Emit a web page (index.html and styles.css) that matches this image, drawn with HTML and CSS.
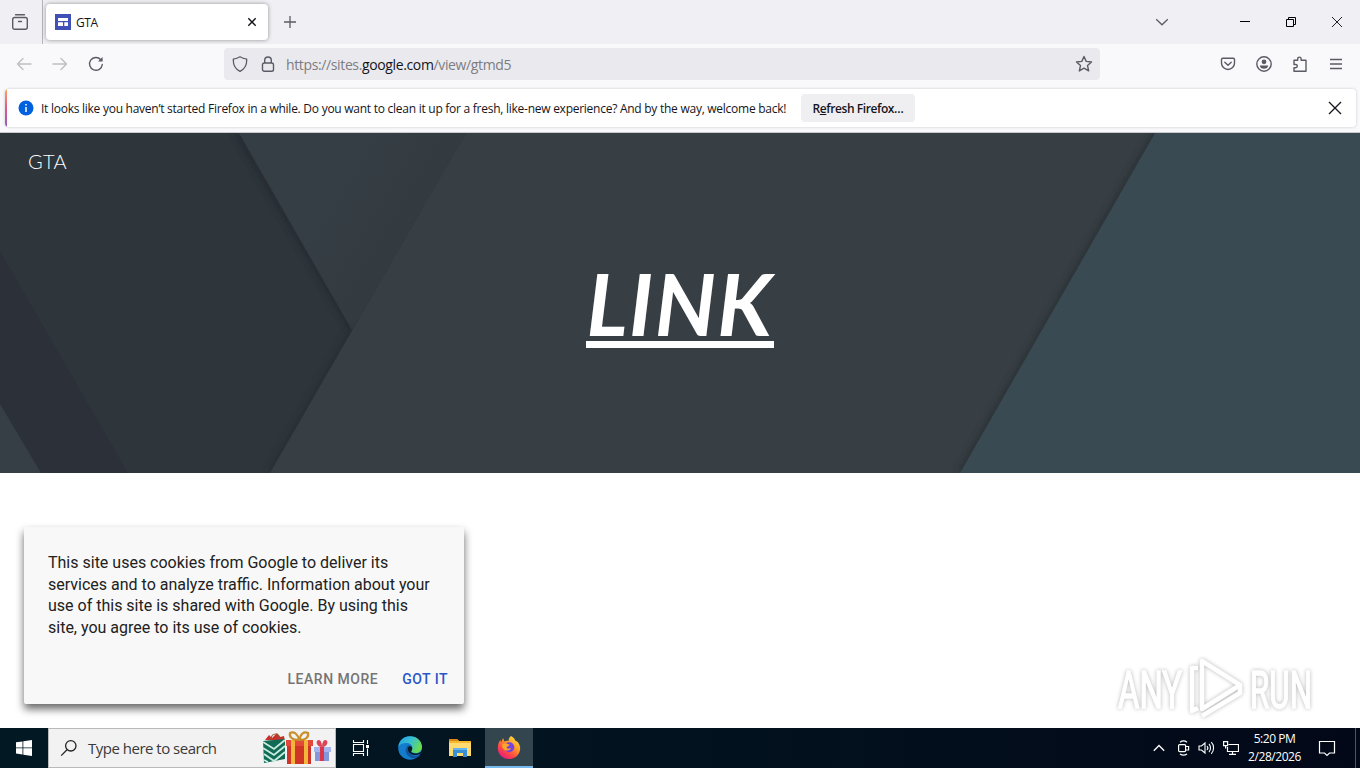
FILE: index.html
```
<!DOCTYPE html>
<html lang="en">
<head>
    <meta charset="UTF-8">
    <meta name="viewport" content="width=device-width, initial-scale=1.0">
    <title>GTA</title>
    <link rel="stylesheet" href="styles.css">
</head>
<body>
    <!-- Tab strip -->
    <header class="tab-strip">
        <div class="firefox-view">
            <svg width="18" height="18" viewBox="0 0 18 18" fill="none" stroke="#5b5b66" stroke-width="1.4" stroke-linecap="round">
                <path d="M4.500 1.700h9"/>
                <rect x="1.700" y="4.500" width="14.600" height="11.800" rx="2"/>
                <path d="M7.500 8.500h3"/>
            </svg>
        </div>
        <div class="tab">
            <svg width="16" height="16" viewBox="0 0 16 16">
                <rect width="16" height="16" fill="#4150b5"/>
                <path d="M3 4h10v3H3zM3 8.2h5v3.8H3zM9.3 8.2H13V12H9.3z" fill="#fff"/>
            </svg>
            <span class="tab-title">GTA</span>
            <svg class="tab-close" width="10" height="10" viewBox="0 0 10 10" stroke="#15141a" stroke-width="1.4"><path d="M1.3 1.3l7.4 7.4M8.7 1.3L1.3 8.7"/></svg>
        </div>
        <svg class="new-tab" width="14" height="14" viewBox="0 0 14 14" stroke="#5b5b66" stroke-width="1.3"><path d="M7 1v12M1 7h12"/></svg>
        <div class="window-buttons">
            <svg width="14" height="14" viewBox="0 0 14 14" fill="none" stroke="#5b5b66" stroke-width="1.3"><path d="M1.2 4.2L7 9.8l5.8-5.6"/></svg>
            <svg class="minimize" width="12" height="12" viewBox="0 0 12 12" stroke="#000"><path d="M1 5.5h10"/></svg>
            <svg width="12" height="12" viewBox="0 0 12 12" fill="none" stroke="#000"><path d="M1.5 3.5h7v7h-7zM3.5 3.5v-2h7v7h-2"/></svg>
            <svg width="12" height="12" viewBox="0 0 12 12" stroke="#222" stroke-width="1"><path d="M1 1l10 10M11 1L1 11"/></svg>
        </div>
    </header>

    <!-- Navigation toolbar -->
    <nav class="toolbar">
        <div class="nav-buttons">
            <svg width="16" height="16" viewBox="0 0 16 16" fill="none" stroke="#bebec4" stroke-width="1.4" stroke-linecap="round" stroke-linejoin="round"><path d="M15 8H1.5M7 2.5L1.5 8 7 13.5"/></svg>
            <svg width="16" height="16" viewBox="0 0 16 16" fill="none" stroke="#bebec4" stroke-width="1.4" stroke-linecap="round" stroke-linejoin="round"><path d="M1 8h13.5M9 2.5L14.5 8 9 13.5"/></svg>
            <svg width="16" height="16" viewBox="0 0 16 16" fill="none" stroke="#5b5b66" stroke-width="1.4" stroke-linecap="round"><path d="M14.3 8.5A6.4 6.4 0 1 1 12.8 3.7"/><path d="M14.6 1v4.6H10z" fill="#5b5b66" stroke="none"/></svg>
        </div>
        <div class="url-bar">
            <svg width="16" height="16" viewBox="0 0 16 16" fill="none" stroke="#5b5b66" stroke-width="1.3" stroke-linejoin="round"><path d="M8 .8c2 1.3 4 2 6.7 2.4C15 9 12.5 13 8 15.3 3.5 13 1 9 1.3 3.2 4 2.8 6 2.1 8 .8z"/></svg>
            <svg width="14" height="16" viewBox="0 0 14 16" fill="none" stroke="#5b5b66" stroke-width="1.4"><rect x="1.5" y="7" width="11" height="8.2" rx="1.8"/><path d="M3.7 7V4.3a3.3 3.3 0 0 1 6.6 0V7"/></svg>
            <span class="url">https://sites.<b>google.com</b>/view/gtmd5</span>
            <svg class="star" width="18" height="18" viewBox="0 0 18 18" fill="none" stroke="#5b5b66" stroke-width="1.4" stroke-linejoin="round"><path d="M9 1.5l2.2 4.9 5.3.6-4 3.6 1.200 5.300L9 13.200l-4.700 2.700 1.200-5.300-4-3.600 5.300-.6z"/></svg>
        </div>
        <div class="toolbar-actions">
            <svg width="16" height="16" viewBox="0 0 16 16" fill="none" stroke="#5b5b66" stroke-width="1.4" stroke-linecap="round" stroke-linejoin="round"><path d="M2.800 2.200h10.400c.8 0 1.300.6 1.300 1.300V7a6.500 6.500 0 0 1-13 0V3.500c0-.7.5-1.300 1.300-1.300z"/><path d="M4.800 6.300L8 9.300l3.200-3"/></svg>
            <svg width="16" height="16" viewBox="0 0 16 16"><circle cx="8" cy="8" r="7.200" fill="none" stroke="#5b5b66" stroke-width="1.4"/><circle cx="8" cy="5.800" r="2.400" fill="#5b5b66"/><path d="M3.800 9.500h8.400c0 2-1.900 3.300-4.200 3.300s-4.200-1.300-4.200-3.300z" fill="#5b5b66"/></svg>
            <svg width="16" height="16" viewBox="0 0 16 16" fill="none" stroke="#5b5b66" stroke-width="1.4" stroke-linejoin="round"><path d="M2 4.300h3.700V2.800a1.700 1.700 0 0 1 3.400 0v1.500H14v11H2v-3.600h1.700a1.600 1.600 0 0 0 0-3.200H2z"/></svg>
            <svg width="14" height="16" viewBox="0 0 14 16" stroke="#5b5b66" stroke-width="1.3"><path d="M1 3.500h12M1 8h12M1 12.500h12"/></svg>
        </div>
    </nav>

    <!-- Notification bar -->
    <section class="notification-wrap">
        <div class="notification">
            <svg width="16" height="16" viewBox="0 0 16 16"><circle cx="8" cy="8" r="7.500" fill="#0061e0"/><path d="M8 7v5M8 4v1.400" stroke="#fff" stroke-width="1.500"/></svg>
            <span class="notification-text">It looks like you haven’t started Firefox in a while. Do you want to clean it up for a fresh, like-new experience? And by the way, welcome back!</span>
            <button class="refresh-button">R<u>e</u>fresh Firefox…</button>
            <svg class="notification-close" width="14" height="14" viewBox="0 0 14 14" stroke="#15141a" stroke-width="1.3"><path d="M1 1l12 12M13 1L1 13"/></svg>
        </div>
    </section>

    <!-- Page content -->
    <main class="page">
        <section class="hero">
            <svg class="hero-bg" width="1360" height="340" viewBox="0 0 1360 340">
                <defs>
                    <filter id="soft" x="-20%" y="-20%" width="140%" height="140%"><feGaussianBlur stdDeviation="3"/></filter>
                    <linearGradient id="fold" gradientUnits="userSpaceOnUse" x1="330" y1="60" x2="405" y2="105">
                        <stop offset="0" stop-color="#363e45"/>
                        <stop offset="1" stop-color="#333b41"/>
                    </linearGradient>
                </defs>
                <rect width="1360" height="340" fill="#2e363c"/>
                <path d="M0 118L128 340H0z" fill="#2c3038"/>
                <path d="M0 271L41 340H0z" fill="#363f45"/>
                <path d="M237 0L352 197" stroke="#20282d" stroke-width="6" opacity=".75" filter="url(#soft)"/>
                <path d="M239 0H466L352 197z" fill="url(#fold)"/>
                <path d="M352 197L270 340" stroke="#20282d" stroke-width="6" opacity=".55" filter="url(#soft)"/>
                <path d="M466 0H1155L960 340H270z" fill="#373f45"/>
                <path d="M1155 0L960 340" stroke="#252c2e" stroke-width="6" opacity=".7" filter="url(#soft)"/>
                <path d="M1155 0H1360V340H960z" fill="#3a4a52"/>
            </svg>
            <div class="site-name">GTA</div>
            <h1 class="hero-title"><a href="#">LINK</a></h1>
        </section>

        <div class="cookie-card">
            <p>This site uses cookies from Google to deliver its services and to analyze traffic. Information about your use of this site is shared with Google. By using this site, you agree to its use of cookies.</p>
            <div class="cookie-buttons">
                <a class="learn-more">LEARN MORE</a>
                <a class="got-it">GOT IT</a>
            </div>
        </div>

        <svg class="watermark" width="220" height="68" viewBox="0 0 220 68">
            <g fill="#fff" stroke="#fff" stroke-width="1.5" font-family="Roboto, sans-serif" font-size="52">
                <text x="4" y="53" textLength="64" lengthAdjust="spacingAndGlyphs">ANY</text>
                <text x="136" y="53" textLength="62" lengthAdjust="spacingAndGlyphs">RUN</text>
            </g>
            <g fill="none" stroke="#fff" stroke-width="4.500" stroke-linejoin="round">
                <path d="M88 6v48l38-24z"/>
                <path d="M84 13h-6v43l6-3M88 61l38-23v-7"/>
            </g>
        </svg>
    </main>

    <!-- Taskbar -->
    <footer class="taskbar">
        <div class="start">
            <svg width="16" height="16" viewBox="0 0 16 16" fill="#fff"><path d="M0 2.300l6.500-.9v6.100H0zM7.300 1.300L16 0v7.500H7.300zM0 8.300h6.500v6.200L0 13.600zM7.300 8.300H16V16l-8.700-1.300z"/></svg>
        </div>
        <div class="search">
            <svg width="18" height="18" viewBox="0 0 18 18" fill="none" stroke="#222" stroke-width="1.3"><circle cx="10.800" cy="6.800" r="5.200"/><path d="M7 10.800L1.200 16.600"/></svg>
            <span>Type here to search</span>
            <svg class="gifts" width="70" height="36" viewBox="0 0 70 36">
                <path d="M3 10l4-5 3 3 5-5 3 4 4-1 1 5z" fill="#c9302c"/>
                <path d="M9 10c0-8 9-8 9 0" fill="none" stroke="#8a5a28" stroke-width="1.2"/>
                <path d="M1 11l22-2v20L2 33z" fill="#126b57"/>
                <path d="M1 12l11 7L23 10M1 18l11 7 11-9M2 24l10 7 11-9M2 30l4 2" fill="none" stroke="#c9eee0" stroke-width="1.8"/>
                <path d="M25 13h24v21H25z" fill="#cf3527"/>
                <path d="M24 10h27v6H24z" fill="#e2493a"/>
                <path d="M29 10h4v24h-4zM42 10h4v24h-4z" fill="#f3b63a"/>
                <path d="M37 10C30 10 27 7 28 3c4-2 8 1 9 7zM38 10c6 0 9-3 8-7-4-2-8 1-8 7z" fill="none" stroke="#c98f2a" stroke-width="2.200"/>
                <path d="M53 20h14v11H53z" fill="#8397da"/>
                <path d="M52 17h17v5H52z" fill="#a5b6ef"/>
                <path d="M58 17h4v14h-4z" fill="#d9384c"/>
                <path d="M60 17c-6 0-7-7-3-7 2 0 3 4 3 7zm0 0c6 0 7-7 3-7-2 0-3 4-3 7z" fill="#dc4458"/>
            </svg>
        </div>
        <div class="task-item">
            <svg width="18" height="16" viewBox="0 0 18 16" fill="none" stroke="#fff" stroke-width="1.1"><path d="M1.500 4.500h10v7h-10zM1.500 0v2.500h10V0M1.500 16v-2.500h10V16M15.500 0v4M15.500 8.500V16"/><path d="M14 5h3v3h-3z" fill="#fff" stroke="none"/></svg>
        </div>
        <div class="task-item">
            <svg width="24" height="24" viewBox="0 0 24 24">
                <defs>
                    <linearGradient id="edge-top" x1="0" y1="0" x2="1" y2=".5"><stop offset="0" stop-color="#229bdd"/><stop offset=".5" stop-color="#35bfd5"/><stop offset="1" stop-color="#68db55"/></linearGradient>
                </defs>
                <circle cx="12" cy="12" r="11.800" fill="#147ccc"/>
                <path d="M.4 11C1 4 6 .2 12 .2c7 0 12 5 12 10.500 0 4-3 6.300-6.500 6.300-3 0-4.300-1.200-4.300-2 0-.6 1.200-1.100 1.200-3.200C14.400 9 11.600 7 8.300 7 4.500 7 1.500 8.500.4 11z" fill="url(#edge-top)"/>
                <path d="M10.200 9.300c-3.500 2.300-4 9.500 2.800 12.200 3.500 1.200 7 .3 9.300-2.500-2 1-7 1.500-9.500-.8-2.200-2-2.300-5-.7-7.600z" fill="#10559d"/>
                <path d="M10.600 10.800c-2 3 .4 7 4.400 8 3.400.8 6.400-.3 7.600-1.300H24v-3c-2 2.500-4 3-6.500 3-3 0-4.300-1.200-4.300-2 0-.6 1-1.100 1.100-3.200-.9-2.500-2.700-2.800-3.700-1.500z" fill="#021b27"/>
            </svg>
        </div>
        <div class="task-item">
            <svg width="22" height="20" viewBox="0 0 22 20"><path d="M0 1h8l2 2h12v15H0z" fill="#f5b82e"/><path d="M0 1h8l2 2H0z" fill="#d88917"/><path d="M0 5h22v13H0z" fill="#ffda70"/><path d="M4 10h14v9h-4v-4H8v4H4z" fill="#398fd3"/><path d="M4 10h14v2H4z" fill="#62b4ef"/></svg>
        </div>
        <div class="task-item active">
            <svg width="24" height="24" viewBox="0 0 24 24">
                <defs>
                    <linearGradient id="fox" x1=".9" y1="0" x2=".2" y2="1"><stop offset="0" stop-color="#ffe84a"/><stop offset=".4" stop-color="#ff9a27"/><stop offset=".7" stop-color="#ff4745"/><stop offset="1" stop-color="#e31587"/></linearGradient>
                </defs>
                <path d="M14 1c3 1.500 4 3.500 4.500 5l1.300.2C23 9 24 13 22.500 17 20.800 21.500 16.500 24 12 24 5 24 .8 19 .8 13c0-3.500 1-6 2.700-8l.5 2.500L6 3l1.500 3.500c1.500-.8 3-.8 4-.3C11.500 4 12.300 2.200 14 1z" fill="url(#fox)"/>
                <circle cx="12.300" cy="12.300" r="5" fill="#7543dd"/>
                <path d="M5 10c2-2 4-2 5-1.200l2.500.7c.2 1.500-3 1.800-3 3.300 1 1.500 3 .6 4.500.2-1 2.500-4 3.300-6.500 2C5.500 14 5 12 5 10z" fill="#ffa42c"/>
            </svg>
        </div>
        <div class="tray">
            <svg class="tray-up" width="12" height="8" viewBox="0 0 12 8" fill="none" stroke="#fff" stroke-width="1.3"><path d="M.8 6.800L6 1.500l5.200 5.300"/></svg>
            <svg class="tray-cam" width="14" height="16" viewBox="0 0 14 16" fill="none" stroke="#fff" stroke-width="1.2"><rect x="1.600" y="4.600" width="7" height="7" rx="1"/><path d="M8.600 6.500h3v3.500h-3M3 2.200C5 .8 8 .8 10 2.200M3 14c2 1.400 5 1.400 7 0"/></svg>
            <svg class="tray-sound" width="17" height="14" viewBox="0 0 17 14" fill="none" stroke="#fff" stroke-width="1.1"><path d="M1 5h2.500L7 2v10L3.500 9H1z"/><path d="M9 5c.9 1 .9 3 0 4M11 3c2 2 2 6 0 8M13.300 1.200c3 3 3 8.600 0 11.600"/></svg>
            <svg class="tray-net" width="16" height="14" viewBox="0 0 16 14" fill="none" stroke="#fff" stroke-width="1.2"><path d="M5.500 3.500h10v7h-11V6M.6.600h4v4h-4zM2.600 4.500v3M9.500 10.500v3M6 13.400h7"/></svg>
            <div class="clock">
                <span>5:20 PM</span>
                <span>2/28/2026</span>
            </div>
            <svg class="tray-note" width="18" height="17" viewBox="0 0 18 17" fill="none" stroke="#fff" stroke-width="1.2"><path d="M1.500 1.500h15v11.500h-5l-2.500 2.500L6.500 13h-5z"/></svg>
            <div class="show-desktop"></div>
        </div>
    </footer>
</body>
</html>
```
FILE: styles.css
```
* {
    box-sizing: border-box;
}

body {
    font-family: 'Open Sans', 'Noto Sans', sans-serif;
    margin: 0;
    padding: 0;
    width: 1360px;
    height: 768px;
    overflow: hidden;
    display: flex;
    flex-direction: column;
    background-color: #ffffff;
    color: #15141a;
}

svg {
    display: block;
    flex-shrink: 0;
}

/* Tab strip */
.tab-strip {
    height: 44px;
    display: flex;
    align-items: center;
    background-color: #f0f0f4;
}

.firefox-view {
    width: 43px;
    height: 44px;
    display: flex;
    align-items: center;
    padding-left: 11px;
    border-right: 1px solid #b4b4bb;
}

.tab {
    width: 222px;
    height: 36px;
    margin-left: 3px;
    padding: 0 11px 0 9px;
    display: flex;
    align-items: center;
    background-color: #ffffff;
    border-radius: 4px;
    box-shadow: 0 0 4px rgba(0, 0, 0, 0.4);
}

.tab-title {
    margin-left: 5px;
    font-size: 12px;
    letter-spacing: -0.4px;
}

.tab-close {
    margin-left: auto;
}

.new-tab {
    margin-left: 15px;
}

.window-buttons {
    margin-left: auto;
    padding-right: 17px;
    display: flex;
    align-items: center;
    gap: 34px;
}

.minimize {
    margin-left: 36px;
}

/* Navigation toolbar */
.toolbar {
    height: 44px;
    display: flex;
    align-items: center;
    padding: 0 17px 4px 16px;
    background-color: #f9f9fb;
}

.nav-buttons {
    width: 208px;
    display: flex;
    gap: 20px;
}

.url-bar {
    width: 876px;
    height: 32px;
    padding: 0 7px 0 8px;
    display: flex;
    align-items: center;
    background-color: #eaeaee;
    border-radius: 4px;
}

.url-bar svg + svg {
    margin-left: 13px;
}

.url {
    margin-left: 11px;
    padding-top: 1px;
    font-size: 14px;
    letter-spacing: -0.37px;
    color: #7c7c83;
}

.url b {
    font-weight: normal;
    color: #15141a;
}

.url-bar .star {
    margin-left: auto;
}

.toolbar-actions {
    margin-left: auto;
    display: flex;
    gap: 20px;
}

.toolbar-actions svg:last-child {
    margin-left: 1px;
}

/* Notification bar */
.notification-wrap {
    height: 45px;
    padding: 1px 4px 5px 5px;
    background-color: #f9f9fb;
    border-bottom: 1px solid #c9cacd;
}

.notification {
    height: 38px;
    padding: 0 14px 0 11px;
    display: flex;
    align-items: center;
    position: relative;
    background-color: #ffffff;
    border-radius: 4px;
    box-shadow: 0 0 3px rgba(0, 0, 0, 0.2);
    overflow: hidden;
}

.notification::before {
    content: '';
    position: absolute;
    left: 0;
    top: 0;
    width: 2px;
    height: 100%;
    background: linear-gradient(#ffa45a, #e2578e, #9059c5);
}

.notification > svg:first-child {
    margin-left: 2px;
}

.notification-text {
    width: 746px;
    margin-left: 7px;
    padding-top: 1px;
    font-size: 12px;
    letter-spacing: -0.26px;
    white-space: nowrap;
}

.refresh-button {
    width: 114px;
    height: 28px;
    margin-left: 14px;
    padding: 1px 0 0;
    border: none;
    border-radius: 4px;
    background-color: #efeff2;
    color: #15141a;
    font-family: 'Open Sans', 'Noto Sans', sans-serif;
    font-size: 12px;
    font-weight: 600;
    letter-spacing: -0.42px;
}

.notification-close {
    margin-left: auto;
}

/* Page content */
.page {
    height: 595px;
    position: relative;
    background-color: #ffffff;
}

.hero {
    height: 340px;
    position: relative;
    overflow: hidden;
}

.hero-bg {
    position: absolute;
    top: 0;
    left: 0;
}

.site-name {
    position: relative;
    padding: 16px 0 0 28px;
    font-family: Lato, sans-serif;
    font-size: 20px;
    font-weight: 300;
    line-height: 24px;
    letter-spacing: 0.3px;
    color: #ffffff;
}

.hero-title {
    position: relative;
    margin: 79px 0 0;
    text-align: center;
    font-family: Lato, sans-serif;
    font-size: 85.33px;
    font-weight: 700;
    font-style: italic;
    line-height: 102px;
    letter-spacing: 1.5px;
}

.hero-title a {
    color: #ffffff;
    text-decoration: none;
    display: inline-block;
    height: 96px;
    border-bottom: 7px solid #ffffff;
}

/* Cookie banner */
.cookie-card {
    width: 440px;
    height: 177px;
    position: absolute;
    left: 24px;
    top: 394px;
    padding: 25px 16px 15px 24px;
    background-color: #f8f8f8;
    border-radius: 2px;
    box-shadow: 0 5px 8px rgba(0, 0, 0, 0.6);
    font-family: Roboto, sans-serif;
    color: #212121;
}

.cookie-card p {
    width: 392px;
    margin: 0;
    font-size: 16px;
    line-height: 21.6px;
}

.cookie-buttons {
    margin-top: 33px;
    display: flex;
    justify-content: flex-end;
    gap: 24px;
    font-size: 14px;
    font-weight: 500;
    line-height: 17px;
    letter-spacing: 0.5px;
}

.learn-more {
    color: #757575;
}

.got-it {
    color: #2a56c6;
}

.watermark {
    position: absolute;
    left: 1114px;
    top: 522px;
    overflow: visible;
    opacity: 0.7;
    filter: drop-shadow(0 0 2px rgba(0, 0, 0, 0.4));
}

/* Taskbar */
.taskbar {
    height: 40px;
    display: flex;
    background: linear-gradient(90deg, #021923, #02131f 45%, #030818);
    color: #ffffff;
}

.start {
    width: 48px;
    display: flex;
    align-items: center;
    justify-content: center;
}

.search {
    width: 288px;
    padding: 0 3px 0 11px;
    display: flex;
    align-items: center;
    background-color: #f2f2f2;
    border: 1px solid #b9b9b9;
    color: #3a3a3a;
    font-size: 15px;
    letter-spacing: -0.5px;
}

.search span {
    margin-left: 10px;
}

.gifts {
    margin-left: auto;
}

.task-item {
    width: 50px;
    display: flex;
    align-items: center;
    justify-content: center;
}

.task-item:nth-child(3) {
    width: 49px;
}

.task-item.active {
    width: 48px;
    background-color: #33454e;
    border-bottom: 2px solid #76b9ed;
}

.tray {
    margin-left: auto;
    display: flex;
    align-items: center;
}

.tray-cam {
    margin-left: 12px;
}

.tray-sound {
    margin-left: 7px;
}

.tray-net {
    margin-left: 8px;
}

.clock {
    width: 71px;
    display: flex;
    flex-direction: column;
    align-items: center;
    font-size: 12px;
    line-height: 18px;
    letter-spacing: -0.45px;
}

.tray-note {
    margin-left: 8px;
}

.show-desktop {
    width: 5px;
    height: 40px;
    margin-left: 19px;
    border-left: 1px solid #50545f;
}
```
